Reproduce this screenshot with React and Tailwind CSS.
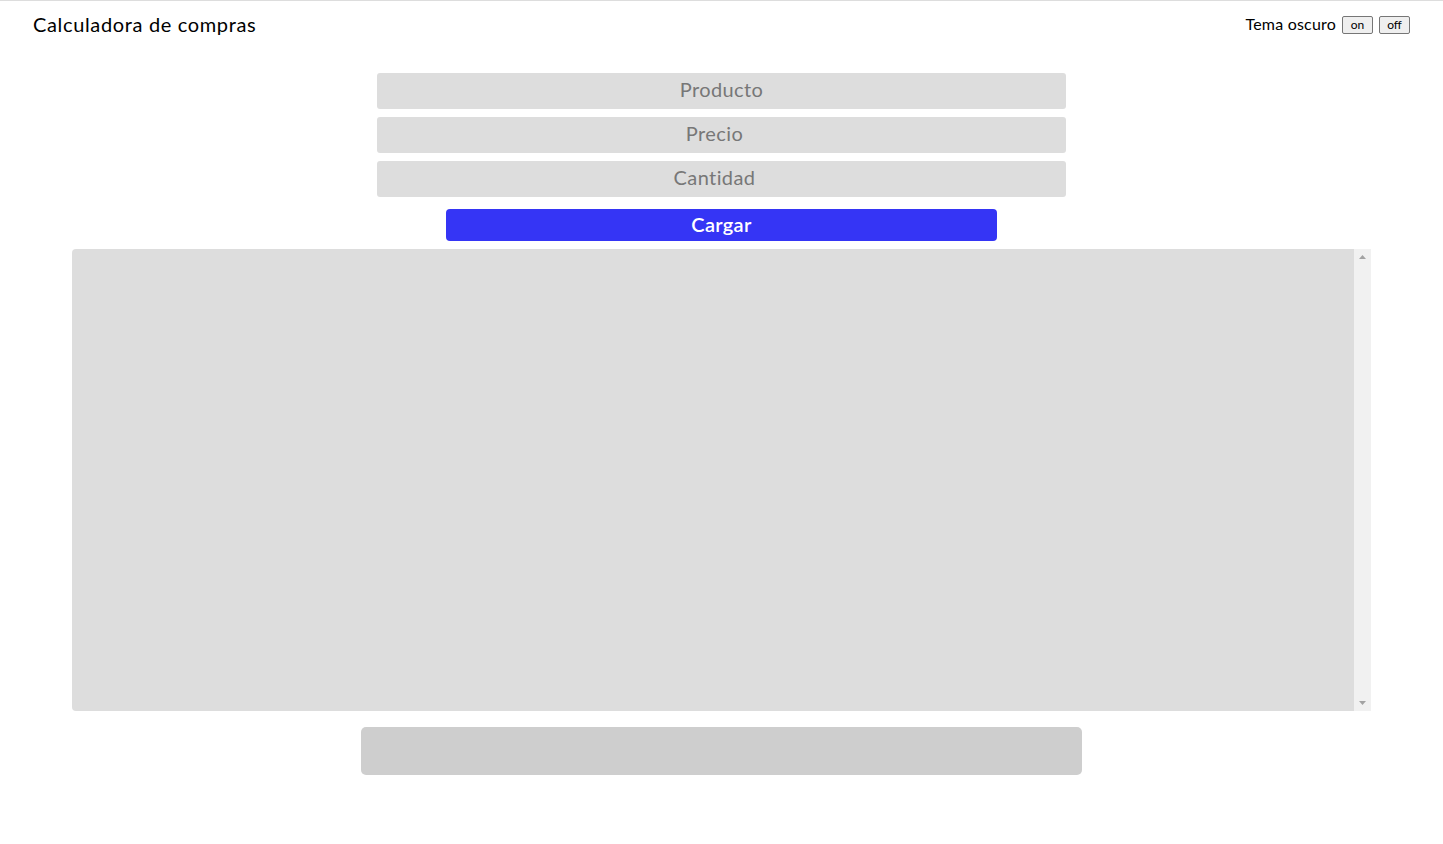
import { useState } from 'react';

const App = () => {
  const [producto, setProducto] = useState('');
  const [precio, setPrecio] = useState('');
  const [cantidad, setCantidad] = useState('');

  return (
    <div className="min-h-screen bg-white border-t border-[#dddddd] text-black font-['Lato',sans-serif]">
      {/* Header */}
      <header className="h-[48px] px-[33px] flex items-center justify-between">
        <h1 className="text-[20px] leading-none tracking-[0.65px] pb-[2px]">Calculadora de compras</h1>
        <div className="flex items-center gap-[6px] text-[16px]">
          <span className="tracking-[0.2px] pb-[2px]">Tema oscuro</span>
          <button className="w-[31px] h-[18px] text-[12px] leading-none bg-[#efefef] border border-[#767676] rounded-[2px]">on</button>
          <button className="w-[31px] h-[18px] text-[12px] leading-none bg-[#efefef] border border-[#767676] rounded-[2px]">off</button>
        </div>
      </header>

      {/* Form */}
      <div className="mt-[24px] flex flex-col items-center">
        <div className="flex flex-col gap-2">
          <input
            value={producto}
            onChange={(e) => setProducto(e.target.value)}
            placeholder="Producto"
            className="w-[689px] h-9 pb-[5px] bg-[#dddddd] rounded-[3px] text-center text-[20px] tracking-[0.4px] placeholder:text-[#777777] outline-none"
          />
          <input
            value={precio}
            onChange={(e) => setPrecio(e.target.value)}
            placeholder="Precio"
            className="w-[689px] h-9 pb-[5px] pr-[14px] bg-[#dddddd] rounded-[3px] text-center text-[20px] tracking-[0.4px] placeholder:text-[#777777] outline-none"
          />
          <input
            value={cantidad}
            onChange={(e) => setCantidad(e.target.value)}
            placeholder="Cantidad"
            className="w-[689px] h-9 pb-[5px] pr-[14px] bg-[#dddddd] rounded-[3px] text-center text-[20px] tracking-[0.4px] placeholder:text-[#777777] outline-none"
          />
        </div>
        <button className="mt-3 w-[551px] h-8 pb-[5px] bg-[#3535f5] text-white text-[20px] font-semibold tracking-[0.3px] rounded-[4px]">
          Cargar
        </button>

        {/* Lista */}
        <div className="mt-2 w-[1299px] h-[462px] flex rounded-l-[4px] overflow-hidden">
          <div className="flex-1 bg-[#dddddd]" />
          <div className="w-[17px] bg-[#f1f1f1] flex flex-col items-center justify-between py-[6px]">
            <svg width="7" height="4" viewBox="0 0 7 4">
              <path d="M0 4 L3.5 0 L7 4 Z" fill="#a3a3a3" />
            </svg>
            <svg width="7" height="4" viewBox="0 0 7 4">
              <path d="M0 0 L3.5 4 L7 0 Z" fill="#a3a3a3" />
            </svg>
          </div>
        </div>

        {/* Total */}
        <div className="mt-4 w-[721px] h-12 bg-[#cecece] rounded-[5px]" />
      </div>
    </div>
  );
};

export default App;
